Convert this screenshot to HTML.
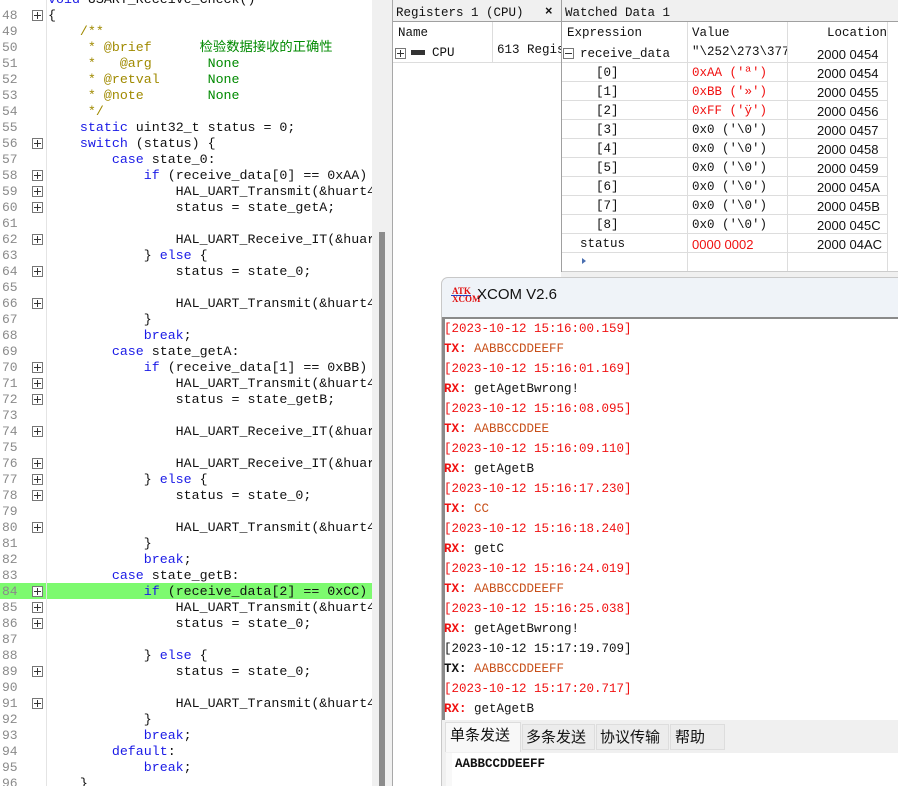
<!DOCTYPE html>
<html><head><meta charset="utf-8"><style>
*{margin:0;padding:0;box-sizing:border-box}
html{width:898px;height:786px;overflow:hidden}
body{width:898px;height:786px;overflow:hidden;background:#f0f0f0;position:relative;font-family:"Liberation Mono","Noto Sans CJK SC",monospace}
#ed{position:absolute;left:0;top:0;width:372px;height:786px;background:#fff;overflow:hidden}
.ln{position:absolute;left:2px;width:20px;font-size:13px;color:#8a8a8a;line-height:16px;white-space:pre}
.bx{position:absolute;left:32px;width:11px;height:11px;border:1px solid #777;background:#fff}
.bx:before{content:"";position:absolute;left:1px;top:4px;width:7px;height:1px;background:#333}
.bx:after{content:"";position:absolute;left:4px;top:1px;width:1px;height:7px;background:#333}
.cd{position:absolute;left:48px;font-size:13.3px;line-height:16px;white-space:pre;color:#111;letter-spacing:0}
.k{color:#1a1ae6}.c{color:#a08a00}.g{color:#008a00}
#gut{position:absolute;left:46px;top:0;width:1px;height:786px;background:#e4e4e4}
.hl{position:absolute;left:47px;top:583px;width:325px;height:16px;background:#7dfa6f}
.hl2{position:absolute;left:0;top:583px;width:46px;height:16px;background:#7dfa6f}
.sm{font-family:"Liberation Mono","Noto Sans CJK SC",monospace;font-size:12.5px;position:absolute;white-space:pre;color:#111}
.w .sm{margin-top:2px}
.red{color:#f01010}.org{color:#c8501a}
.log{position:absolute;left:444px;font-family:"Liberation Mono",monospace;font-size:12.5px;white-space:pre;line-height:20px;margin-top:1px}
</style></head><body>
<div id="ed">
<div id="gut"></div>
<div class="hl2"></div><div class="hl"></div>
<div class="cd" style="top:-8px"><span class="k">void</span> USART_Receive_Check()</div>
<div class="ln" style="top:8px">48</div><div class="bx" style="top:10px"></div><div class="cd" style="top:8px">{</div>
<div class="ln" style="top:24px">49</div><div class="cd c" style="top:24px">    /**</div>
<div class="ln" style="top:40px">50</div><div class="cd c" style="top:40px">     * @brief      <span class="g">检验数据接收的正确性</span></div>
<div class="ln" style="top:56px">51</div><div class="cd c" style="top:56px">     *   @arg       <span class="g">None</span></div>
<div class="ln" style="top:72px">52</div><div class="cd c" style="top:72px">     * @retval      <span class="g">None</span></div>
<div class="ln" style="top:88px">53</div><div class="cd c" style="top:88px">     * @note        <span class="g">None</span></div>
<div class="ln" style="top:104px">54</div><div class="cd c" style="top:104px">     */</div>
<div class="ln" style="top:120px">55</div><div class="cd" style="top:120px">    <span class="k">static</span> uint32_t status = 0;</div>
<div class="ln" style="top:136px">56</div><div class="bx" style="top:138px"></div><div class="cd" style="top:136px">    <span class="k">switch</span> (status) {</div>
<div class="ln" style="top:152px">57</div><div class="cd" style="top:152px">        <span class="k">case</span> state_0:</div>
<div class="ln" style="top:168px">58</div><div class="bx" style="top:170px"></div><div class="cd" style="top:168px">            <span class="k">if</span> (receive_data[0] == 0xAA)</div>
<div class="ln" style="top:184px">59</div><div class="bx" style="top:186px"></div><div class="cd" style="top:184px">                HAL_UART_Transmit(&amp;huart4</div>
<div class="ln" style="top:200px">60</div><div class="bx" style="top:202px"></div><div class="cd" style="top:200px">                status = state_getA;</div>
<div class="ln" style="top:216px">61</div>
<div class="ln" style="top:232px">62</div><div class="bx" style="top:234px"></div><div class="cd" style="top:232px">                HAL_UART_Receive_IT(&amp;huar</div>
<div class="ln" style="top:248px">63</div><div class="cd" style="top:248px">            } <span class="k">else</span> {</div>
<div class="ln" style="top:264px">64</div><div class="bx" style="top:266px"></div><div class="cd" style="top:264px">                status = state_0;</div>
<div class="ln" style="top:280px">65</div>
<div class="ln" style="top:296px">66</div><div class="bx" style="top:298px"></div><div class="cd" style="top:296px">                HAL_UART_Transmit(&amp;huart4</div>
<div class="ln" style="top:312px">67</div><div class="cd" style="top:312px">            }</div>
<div class="ln" style="top:328px">68</div><div class="cd" style="top:328px">            <span class="k">break</span>;</div>
<div class="ln" style="top:344px">69</div><div class="cd" style="top:344px">        <span class="k">case</span> state_getA:</div>
<div class="ln" style="top:360px">70</div><div class="bx" style="top:362px"></div><div class="cd" style="top:360px">            <span class="k">if</span> (receive_data[1] == 0xBB)</div>
<div class="ln" style="top:376px">71</div><div class="bx" style="top:378px"></div><div class="cd" style="top:376px">                HAL_UART_Transmit(&amp;huart4</div>
<div class="ln" style="top:392px">72</div><div class="bx" style="top:394px"></div><div class="cd" style="top:392px">                status = state_getB;</div>
<div class="ln" style="top:408px">73</div>
<div class="ln" style="top:424px">74</div><div class="bx" style="top:426px"></div><div class="cd" style="top:424px">                HAL_UART_Receive_IT(&amp;huar</div>
<div class="ln" style="top:440px">75</div>
<div class="ln" style="top:456px">76</div><div class="bx" style="top:458px"></div><div class="cd" style="top:456px">                HAL_UART_Receive_IT(&amp;huar</div>
<div class="ln" style="top:472px">77</div><div class="bx" style="top:474px"></div><div class="cd" style="top:472px">            } <span class="k">else</span> {</div>
<div class="ln" style="top:488px">78</div><div class="bx" style="top:490px"></div><div class="cd" style="top:488px">                status = state_0;</div>
<div class="ln" style="top:504px">79</div>
<div class="ln" style="top:520px">80</div><div class="bx" style="top:522px"></div><div class="cd" style="top:520px">                HAL_UART_Transmit(&amp;huart4</div>
<div class="ln" style="top:536px">81</div><div class="cd" style="top:536px">            }</div>
<div class="ln" style="top:552px">82</div><div class="cd" style="top:552px">            <span class="k">break</span>;</div>
<div class="ln" style="top:568px">83</div><div class="cd" style="top:568px">        <span class="k">case</span> state_getB:</div>
<div class="ln" style="top:584px">84</div><div class="bx" style="top:586px"></div><div class="cd" style="top:584px">            <span class="k">if</span> (receive_data[2] == 0xCC)</div>
<div class="ln" style="top:600px">85</div><div class="bx" style="top:602px"></div><div class="cd" style="top:600px">                HAL_UART_Transmit(&amp;huart4</div>
<div class="ln" style="top:616px">86</div><div class="bx" style="top:618px"></div><div class="cd" style="top:616px">                status = state_0;</div>
<div class="ln" style="top:632px">87</div>
<div class="ln" style="top:648px">88</div><div class="cd" style="top:648px">            } <span class="k">else</span> {</div>
<div class="ln" style="top:664px">89</div><div class="bx" style="top:666px"></div><div class="cd" style="top:664px">                status = state_0;</div>
<div class="ln" style="top:680px">90</div>
<div class="ln" style="top:696px">91</div><div class="bx" style="top:698px"></div><div class="cd" style="top:696px">                HAL_UART_Transmit(&amp;huart4</div>
<div class="ln" style="top:712px">92</div><div class="cd" style="top:712px">            }</div>
<div class="ln" style="top:728px">93</div><div class="cd" style="top:728px">            <span class="k">break</span>;</div>
<div class="ln" style="top:744px">94</div><div class="cd" style="top:744px">        <span class="k">default</span>:</div>
<div class="ln" style="top:760px">95</div><div class="cd" style="top:760px">            <span class="k">break</span>;</div>
<div class="ln" style="top:776px">96</div><div class="cd" style="top:776px">    }</div>
</div>
<div style="position:absolute;left:372px;top:0;width:20px;height:786px;background:#f0f0f0"></div>
<div style="position:absolute;left:379px;top:232px;width:6px;height:554px;background:#8c8c8c"></div>
<div style="position:absolute;left:392px;top:0;width:1px;height:786px;background:#a8a8a8"></div>
<div class="w">
<div style="position:absolute;left:393px;top:5px;width:168px;height:17px;background:#f0f0f0;border-bottom:1px solid #a0a0a0"></div>
<div class="sm" style="left:396px;top:4px">Registers 1 (CPU)</div>
<div class="sm" style="left:545px;top:3px;font-weight:bold">×</div>
<div style="position:absolute;left:393px;top:22px;width:168px;height:764px;background:#fff"></div>
<div style="position:absolute;left:492px;top:22px;width:1px;height:40px;background:#ddd"></div>
<div style="position:absolute;left:393px;top:62px;width:168px;height:1px;background:#ddd"></div>
<div class="sm" style="left:398px;top:24px">Name</div>
<div class="bx" style="left:395px;top:48px"></div>
<div style="position:absolute;left:411px;top:50px;width:14px;height:5px;background:#333"></div>
<div class="sm" style="left:432px;top:44px">CPU</div>
<div class="sm" style="left:497px;top:41px;width:64px;overflow:hidden">613 Regis</div>
<div style="position:absolute;left:561px;top:0;width:1px;height:272px;background:#a0a0a0"></div>
<div style="position:absolute;left:562px;top:5px;width:336px;height:17px;background:#f0f0f0;border-bottom:1px solid #a0a0a0"></div>
<div class="sm" style="left:565px;top:4px">Watched Data 1</div>
<div style="position:absolute;left:562px;top:22px;width:336px;height:250px;background:#fff"></div>
<div style="position:absolute;left:687px;top:22px;width:1px;height:250px;background:#ddd"></div>
<div style="position:absolute;left:787px;top:22px;width:1px;height:250px;background:#ddd"></div>
<div style="position:absolute;left:887px;top:22px;width:1px;height:250px;background:#ddd"></div>
<div style="position:absolute;left:562px;top:271px;width:336px;height:1px;background:#ccc"></div>
<div class="sm" style="left:567px;top:24px">Expression</div>
<div class="sm" style="left:692px;top:24px">Value</div>
<div class="sm" style="left:827px;top:24px">Location</div>
<div style="position:absolute;left:562px;top:62px;width:326px;height:1px;background:#ddd"></div>
<div style="position:absolute;left:563px;top:48px;width:11px;height:11px;border:1px solid #777;background:#fff"><div style="position:absolute;left:1px;top:4px;width:7px;height:1px;background:#333"></div></div>
<div class="sm" style="left:580px;top:45px">receive_data</div>
<div class="sm" style="left:692px;top:43px;width:95px;overflow:hidden">"\252\273\377</div>
<div class="sm" style="left:817px;top:45px;font-family:'Liberation Sans',sans-serif;font-size:13px">2000 0454</div>
<div style="position:absolute;left:562px;top:81px;width:326px;height:1px;background:#ddd"></div>
<div style="position:absolute;left:562px;top:100px;width:326px;height:1px;background:#ddd"></div>
<div style="position:absolute;left:562px;top:119px;width:326px;height:1px;background:#ddd"></div>
<div style="position:absolute;left:562px;top:138px;width:326px;height:1px;background:#ddd"></div>
<div style="position:absolute;left:562px;top:157px;width:326px;height:1px;background:#ddd"></div>
<div style="position:absolute;left:562px;top:176px;width:326px;height:1px;background:#ddd"></div>
<div style="position:absolute;left:562px;top:195px;width:326px;height:1px;background:#ddd"></div>
<div style="position:absolute;left:562px;top:214px;width:326px;height:1px;background:#ddd"></div>
<div style="position:absolute;left:562px;top:233px;width:326px;height:1px;background:#ddd"></div>
<div style="position:absolute;left:562px;top:252px;width:326px;height:1px;background:#ddd"></div>
<div class="sm" style="left:596px;top:64px">[0]</div><div class="sm red" style="left:692px;top:64px">0xAA ('ª')</div><div class="sm" style="left:817px;top:64px;font-family:'Liberation Sans',sans-serif;font-size:13px">2000 0454</div>
<div class="sm" style="left:596px;top:83px">[1]</div><div class="sm red" style="left:692px;top:83px">0xBB ('»')</div><div class="sm" style="left:817px;top:83px;font-family:'Liberation Sans',sans-serif;font-size:13px">2000 0455</div>
<div class="sm" style="left:596px;top:102px">[2]</div><div class="sm red" style="left:692px;top:102px">0xFF ('ÿ')</div><div class="sm" style="left:817px;top:102px;font-family:'Liberation Sans',sans-serif;font-size:13px">2000 0456</div>
<div class="sm" style="left:596px;top:121px">[3]</div><div class="sm" style="left:692px;top:121px">0x0 ('\0')</div><div class="sm" style="left:817px;top:121px;font-family:'Liberation Sans',sans-serif;font-size:13px">2000 0457</div>
<div class="sm" style="left:596px;top:140px">[4]</div><div class="sm" style="left:692px;top:140px">0x0 ('\0')</div><div class="sm" style="left:817px;top:140px;font-family:'Liberation Sans',sans-serif;font-size:13px">2000 0458</div>
<div class="sm" style="left:596px;top:159px">[5]</div><div class="sm" style="left:692px;top:159px">0x0 ('\0')</div><div class="sm" style="left:817px;top:159px;font-family:'Liberation Sans',sans-serif;font-size:13px">2000 0459</div>
<div class="sm" style="left:596px;top:178px">[6]</div><div class="sm" style="left:692px;top:178px">0x0 ('\0')</div><div class="sm" style="left:817px;top:178px;font-family:'Liberation Sans',sans-serif;font-size:13px">2000 045A</div>
<div class="sm" style="left:596px;top:197px">[7]</div><div class="sm" style="left:692px;top:197px">0x0 ('\0')</div><div class="sm" style="left:817px;top:197px;font-family:'Liberation Sans',sans-serif;font-size:13px">2000 045B</div>
<div class="sm" style="left:596px;top:216px">[8]</div><div class="sm" style="left:692px;top:216px">0x0 ('\0')</div><div class="sm" style="left:817px;top:216px;font-family:'Liberation Sans',sans-serif;font-size:13px">2000 045C</div>
<div class="sm" style="left:580px;top:235px">status</div><div class="sm red" style="left:692px;top:235px;font-family:'Liberation Sans',sans-serif;font-size:13px">0000 0002</div><div class="sm" style="left:817px;top:235px;font-family:'Liberation Sans',sans-serif;font-size:13px">2000 04AC</div>
<div style="position:absolute;left:582px;top:258px;width:0;height:0;border-left:4px solid #4a6fb0;border-top:3px solid transparent;border-bottom:3px solid transparent"></div>
</div>
<div style="position:absolute;left:441px;top:277px;width:457px;height:509px;background:#eff3f8;border:1px solid #c8c8c8;border-right:none;border-bottom:none;border-radius:7px 0 0 0"></div>
<div style="position:absolute;left:452px;top:287px;font-family:'Liberation Serif',serif;font-size:9px;font-weight:bold;color:#e01010;line-height:8px">ATK<br>XCOM</div>
<div style="position:absolute;left:451px;top:295px;width:20px;height:1px;background:#2040c0"></div>
<div style="position:absolute;left:477px;top:286px;font-family:'Liberation Sans',sans-serif;font-size:15px;color:#111">XCOM V2.6</div>
<div style="position:absolute;left:442px;top:317px;width:456px;height:403px;background:#fff;border-left:3px solid #8a8a8a;border-top:2px solid #8a8a8a"></div>
<div class="log red" style="top:318px">[2023-10-12 15:16:00.159]</div>
<div class="log red" style="top:338px"><b>TX:</b> <span class="org">AABBCCDDEEFF</span></div>
<div class="log red" style="top:358px">[2023-10-12 15:16:01.169]</div>
<div class="log red" style="top:378px"><b>RX:</b> <span style="color:#111">getAgetBwrong!</span></div>
<div class="log red" style="top:398px">[2023-10-12 15:16:08.095]</div>
<div class="log red" style="top:418px"><b>TX:</b> <span class="org">AABBCCDDEE</span></div>
<div class="log red" style="top:438px">[2023-10-12 15:16:09.110]</div>
<div class="log red" style="top:458px"><b>RX:</b> <span style="color:#111">getAgetB</span></div>
<div class="log red" style="top:478px">[2023-10-12 15:16:17.230]</div>
<div class="log red" style="top:498px"><b>TX:</b> <span class="org">CC</span></div>
<div class="log red" style="top:518px">[2023-10-12 15:16:18.240]</div>
<div class="log red" style="top:538px"><b>RX:</b> <span style="color:#111">getC</span></div>
<div class="log red" style="top:558px">[2023-10-12 15:16:24.019]</div>
<div class="log red" style="top:578px"><b>TX:</b> <span class="org">AABBCCDDEEFF</span></div>
<div class="log red" style="top:598px">[2023-10-12 15:16:25.038]</div>
<div class="log red" style="top:618px"><b>RX:</b> <span style="color:#111">getAgetBwrong!</span></div>
<div class="log" style="top:638px;color:#111">[2023-10-12 15:17:19.709]</div>
<div class="log" style="top:658px;color:#111"><b>TX:</b> <span class="org">AABBCCDDEEFF</span></div>
<div class="log red" style="top:678px">[2023-10-12 15:17:20.717]</div>
<div class="log red" style="top:698px"><b>RX:</b> <span style="color:#111">getAgetB</span></div>
<div style="position:absolute;left:442px;top:720px;width:456px;height:66px;background:#f0f0f0"></div>
<div style="position:absolute;left:445px;top:722px;width:76px;height:30px;background:#f8f8f8;border:1px solid #ddd;border-bottom:none"></div>
<div style="position:absolute;left:522px;top:724px;width:73px;height:26px;background:#ececec;border:1px solid #ddd"></div>
<div style="position:absolute;left:596px;top:724px;width:73px;height:26px;background:#ececec;border:1px solid #ddd"></div>
<div style="position:absolute;left:670px;top:724px;width:55px;height:26px;background:#ececec;border:1px solid #ddd"></div>
<div style="position:absolute;left:450px;top:724px;font-family:'Liberation Sans','Noto Sans CJK SC',sans-serif;font-size:15px;color:#111">单条发送</div>
<div style="position:absolute;left:526px;top:726px;font-family:'Liberation Sans','Noto Sans CJK SC',sans-serif;font-size:15px;color:#111">多条发送</div>
<div style="position:absolute;left:600px;top:726px;font-family:'Liberation Sans','Noto Sans CJK SC',sans-serif;font-size:15px;color:#111">协议传输</div>
<div style="position:absolute;left:675px;top:726px;font-family:'Liberation Sans','Noto Sans CJK SC',sans-serif;font-size:15px;color:#111">帮助</div>
<div style="position:absolute;left:446px;top:753px;width:452px;height:33px;background:#f8f8f8"></div>
<div style="position:absolute;left:452px;top:753px;width:446px;height:33px;background:#fff"></div>
<div style="position:absolute;left:455px;top:757px;font-family:'Liberation Mono',monospace;font-size:12.5px;font-weight:bold;color:#111">AABBCCDDEEFF</div>
</body></html>
